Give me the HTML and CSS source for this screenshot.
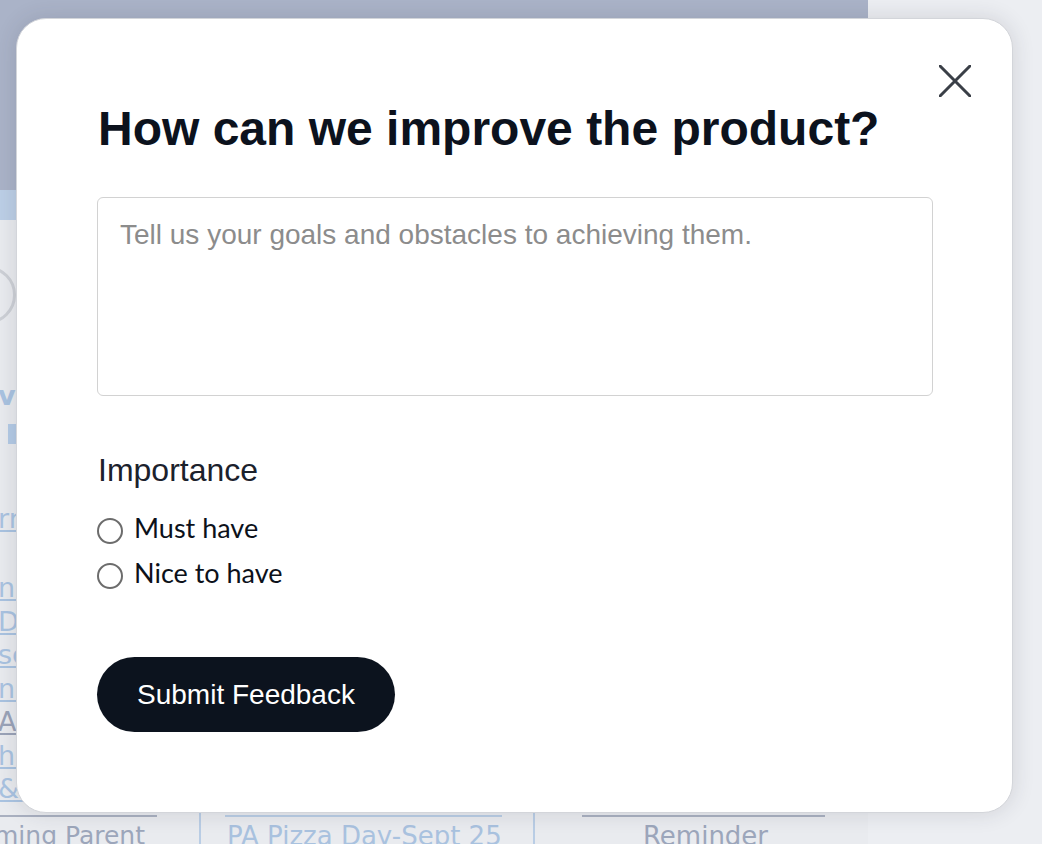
FILE: index.html
```html
<!DOCTYPE html>
<html lang="en">
<head>
<meta charset="utf-8">
<title>Feedback</title>
<link rel="stylesheet" href="styles.css">
</head>
<body>
<div class="page">
  <div class="banner"></div>
  <div class="subbar"></div>
  <div class="calendar">
    <div class="col col-first">
      <div class="gear"></div>
      <div class="entry bold e-vo">vo</div>
      <div class="entry bar e-bar"></div>
      <div class="entry link e-rr">rr</div>
      <div class="entry-list">
        <div class="entry link">nn</div>
        <div class="entry link">Di</div>
        <div class="entry link">sc</div>
        <div class="entry link">nl</div>
        <div class="entry link grey">Al</div>
        <div class="entry link">he</div>
        <div class="entry link">&amp; L</div>
      </div>
      <div class="cell-line grey-line"></div>
      <div class="cell-text grey-text first-text">ming Parent</div>
    </div>
    <div class="col col-mid">
      <div class="cell-line blue-line"></div>
      <div class="cell-text blue-text mid-text">PA Pizza Day-Sept 25</div>
    </div>
    <div class="col col-last">
      <div class="cell-line grey-line"></div>
      <div class="cell-text grey-text last-text">Reminder</div>
    </div>
  </div>
</div>

<div class="modal" role="dialog" aria-labelledby="fb-title">
  <button class="close" aria-label="Close">
    <svg width="32" height="32" viewBox="0 0 32 32" aria-hidden="true">
      <path d="M1 1 L31 31 M31 1 L1 31" stroke="#3a3f47" stroke-width="3" stroke-linecap="round" fill="none"/>
    </svg>
  </button>
  <h1 id="fb-title" class="title">How can we improve the product?</h1>
  <textarea class="goals" placeholder="Tell us your goals and obstacles to achieving them."></textarea>
  <div class="group-label">Importance</div>
  <label class="option"><input type="radio" name="imp" class="radio"><span>Must have</span></label>
  <label class="option"><input type="radio" name="imp" class="radio"><span>Nice to have</span></label>
  <button class="submit">Submit Feedback</button>
</div>
</body>
</html>
```

FILE: styles.css
```css
* { box-sizing: border-box; }
html, body { margin: 0; padding: 0; }
body {
  width: 1042px;
  height: 844px;
  overflow: hidden;
  background: #eceef2;
  font-family: "Liberation Sans", Arial, sans-serif;
  position: relative;
}

/* ---------- background page (dimmed) ---------- */
.page { width: 1042px; height: 844px; }
.banner { width: 868px; height: 190px; background: #aab3c8; }
.subbar { width: 868px; height: 30px; background: #bccfe6; }
.calendar {
  width: 868px;
  height: 624px;
  display: grid;
  grid-template-columns: 201px 334px 333px;
  background: #e9ebef;
  font-family: "DejaVu Sans", Verdana, sans-serif;
  overflow: hidden;
}
.col { display: flex; flex-direction: column; overflow: hidden; }
.col-first { border-right: 2px solid #b9cde5; }
.col-mid { border-right: 2px solid #b9cde5; }
.gear {
  width: 58px; height: 58px;
  margin: 46px 0 0 -42px;
  border: 3px solid #cdd0d6;
  border-radius: 50%;
  flex: none;
}
.entry {
  font-size: 27px;
  line-height: 33px;
  color: #a9c3e1;
  margin-left: -2px;
  white-space: nowrap;
  flex: none;
}
.entry.bold { font-weight: bold; }
.e-vo { margin-top: 55px; }
.e-bar { width: 10px; height: 20px; background: #b4cbe6; margin: 12px 0 0 8px; }
.e-rr { margin-top: 58px; }
.link { text-decoration: underline; }
.entry.grey { color: #9aa3b8; }
.entry-list { margin-top: 36px; display: flex; flex-direction: column; flex: none; }
.entry-list .entry { line-height: 33.5px; }

.cell-line { height: 2px; margin-top: auto; flex: none; }
.col-first .cell-line { margin-right: 42px; }
.col-mid .cell-line { margin-left: 24px; margin-right: 31px; }
.col-last .cell-line { margin-left: 47px; margin-right: 43px; }
.blue-line { background: #b9cde4; }
.grey-line { background: #a9b0c0; }
.cell-text {
  flex: none;
  height: 27px;
  font-size: 26px;
  line-height: 34px;
  white-space: nowrap;
  padding-top: 2px;
}
.grey-text { color: #9ca6bb; }
.blue-text { color: #a9c2df; }
.first-text { margin-left: -6px; font-size: 25px; }
.mid-text { padding-left: 26px; }
.last-text { text-align: center; padding-left: 8px; }

/* ---------- modal ---------- */
.modal {
  position: absolute;
  left: 16px;
  top: 18px;
  width: 997px;
  height: 795px;
  background: #ffffff;
  border: 1px solid #d3d5da;
  border-radius: 30px;
  box-shadow: 0 0 22px rgba(40, 45, 60, 0.14);
  padding: 82px 80px 80px 81px;
  display: flex;
  flex-direction: column;
  align-items: flex-start;
}
.close {
  position: absolute;
  top: 46px;
  right: 41px;
  width: 32px;
  height: 32px;
  padding: 0;
  border: 0;
  background: transparent;
  cursor: pointer;
}
.close svg { display: block; }
.title {
  margin: 0;
  font-family: "Liberation Sans", Arial, sans-serif;
  font-weight: bold;
  font-size: 48px;
  line-height: 56px;
  color: #0c121d;
}
.goals {
  margin-top: 40px;
  width: 836px;
  height: 199px;
  border: 1px solid #d2d2d2;
  border-radius: 6px;
  padding: 21px 22px;
  font-family: "Liberation Sans", Arial, sans-serif;
  font-size: 28px;
  line-height: 32px;
  resize: none;
  outline: none;
  margin-left: -1px;
}
.goals::placeholder { color: #8c8c8c; opacity: 1; }
.group-label {
  margin-top: 55px;
  font-family: "Liberation Sans", Arial, sans-serif;
  font-size: 32px;
  line-height: 38px;
  color: #1b212c;
}
.group-label + .option { margin-top: 16px; }
.option {
  display: flex;
  align-items: center;
  gap: 11px;
  height: 45px;
  font-family: Lato, "Noto Sans", sans-serif;
  font-size: 27px;
  color: #0c111a;
  cursor: pointer;
  margin-left: -1px;
}
.radio {
  appearance: none;
  -webkit-appearance: none;
  margin: 0;
  width: 26px;
  height: 26px;
  border: 2px solid #6c6c6c;
  border-radius: 50%;
  background: #fff;
  position: relative;
  top: 3px;
}
.submit {
  margin-top: 62px;
  margin-left: -1px;
  width: 298px;
  height: 75px;
  border: 0;
  border-radius: 38px;
  background: #0c131e;
  color: #ffffff;
  font-family: "Liberation Sans", Arial, sans-serif;
  font-size: 28px;
  cursor: pointer;
}
```
